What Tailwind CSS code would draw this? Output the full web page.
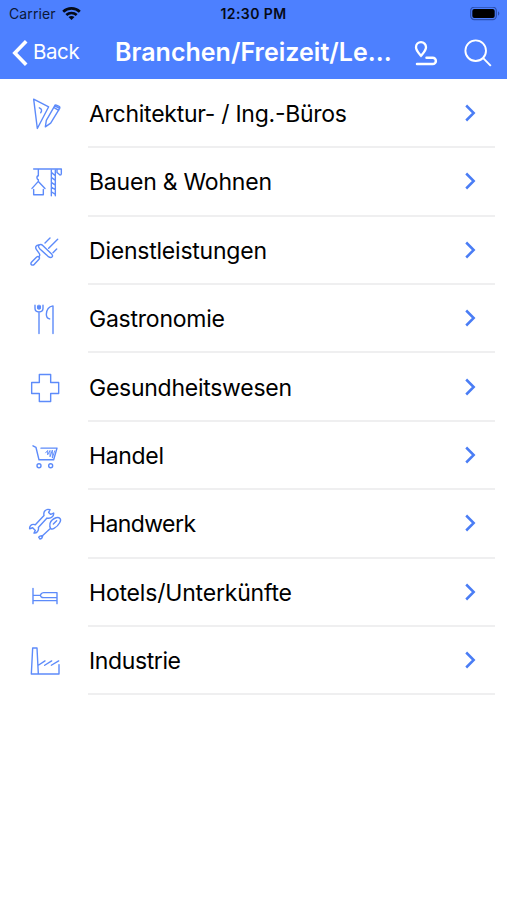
<!doctype html>
<html lang="de">
    <head>
        <meta charset="UTF-8" />
        <meta name="viewport" content="width=device-width, initial-scale=1.0" />
        <title>Branchen</title>
        <script src="https://cdn.jsdelivr.net/npm/@tailwindcss/browser@4"></script>
    </head>

    <body class="h-screen overflow-hidden bg-white font-['Inter',sans-serif]">
        <header class="h-[79px] bg-[#4d80ff]">
            <!-- status bar -->
            <div class="grid h-[27px] grid-cols-3 items-center pr-[7px] pl-[9px] text-[14px] leading-none">
                <div class="flex items-center gap-[6px] text-[#0c1838]">
                    <span class="text-[14px] tracking-[0.1px]">Carrier</span>
                    <svg class="h-[14px] w-[19px]" viewBox="0 0 19 14" fill="none" stroke="#050a18" stroke-width="2.7">
                        <path d="M1.2 4.8C5.8.3 13.2.3 17.8 4.8" />
                        <path d="M4.300 8.100c3-2.800 7.400-2.800 10.400 0" />
                        <path d="M6.500 10.100c1.900-1.500 4.100-1.500 6 0l-3 3z" fill="#050a18" stroke="none" />
                    </svg>
                </div>
                <div class="-ml-[2px] pt-[1px] text-center font-semibold tracking-[0.4px] whitespace-nowrap text-[#050a18]">12:30 PM</div>
                <svg class="h-[14px] w-[30px] justify-self-end" viewBox="0 0 30 14">
                    <rect x=".7" y=".2" width="25.6" height="12.4" rx="3.6" fill="none" stroke="#2c4fae" stroke-width="1.2" />
                    <rect x="2.3" y="1.9" width="22.4" height="9" rx="2" />
                    <path d="M28 4.300c1.800.7 1.800 3.700 0 4.400z" fill="#2c4fae" />
                </svg>
            </div>
            <!-- navigation bar -->
            <div class="flex h-[51px] items-center pl-[12px] text-white">
                <svg class="h-[28px] w-[17px]" viewBox="0 0 17 28" fill="none" stroke="currentColor" stroke-width="3.6">
                    <path d="M14.2 2.300 2.800 14l11.400 11.700" />
                </svg>
                <span class="ml-[4px] w-[82px] text-[20.5px] tracking-[-0.4px]">Back</span>
                <h1 class="w-[278px] text-[25px] font-semibold tracking-[0.02px] whitespace-nowrap">Branchen/Freizeit/Le...</h1>
                <svg class="ml-[20px] h-[28px] w-[25px]" viewBox="0 0 25 28" fill="none" stroke="currentColor" stroke-width="2.3">
                    <path d="M8 16.800C5.500 13.800 3 11.300 3 8.200a5 5 0 0 1 10 0c0 3.100-2.500 5.600-5 8.600z" />
                    <path d="M13.500 18.800h6.200a3.150 3.150 0 0 1 0 6.300H4" stroke-width="2.5" stroke-linecap="round" />
                </svg>
                <svg class="ml-[26px] h-[28px] w-[28px]" viewBox="0 0 28 28" fill="none" stroke="currentColor" stroke-width="1.9">
                    <circle cx="11.700" cy="11.700" r="10.300" />
                    <path d="m19.200 19.200 7.600 7.600" />
                </svg>
            </div>
        </header>

        <ul id="list" class="pt-[0.8px]"></ul>

        <script>
            // box is the icon's viewBox, width is the drawn width of the label
            const rows = [
                {
                    label: "Architektur- / Ing.-Büros",
                    width: 258,
                    box: "12 21.6 132 132",
                    icon: `<path d="M41 43 86 66 52 131z"/><path d="M58 69q11 5 4 15"/>
                        <path d="m104 63 15 8q2-5-3-7l-7-3q-4-1-5 2zM104 63 79 107l-3 19 16-11 27-44M101 68l15 9"/>`,
                },
                {
                    label: "Bauen & Wohnen",
                    width: 183,
                    box: "12 226.8 132 132",
                    icon: `<path d="M41 254h83v14q0 4-4 4l-9-8v-7M55 257v17q-5 1-4 7 1 4 4 5v5M36 312l19-21 20 21M41 315v16h29v-16"/>
                        <path d="M94 257v77M106 257v77M94 264l12 10M94 279l12 9M94 294l12 8M94 308l12 8M94 322l12 8"/>`,
                },
                {
                    label: "Dienstleistungen",
                    width: 178,
                    box: "12 24 132 132",
                    icon: `<path d="M57 72q6-4 12 2l25 24q6 7 2 10-4 4-12-2L59 83q-6-7-2-11z"/><path d="M57 72q-7 0-9 4-2 5 1 9l9 13q3 5-1 9"/>
                        <path d="m50 108-15 15q-4 5-1 8 4 3 9-1l14-15q3-4 0-7-3-3-7 0zM75 66l15-15M86 82l27-27M99 95l11-11"/>`,
                },
                {
                    label: "Gastronomie",
                    width: 136,
                    box: "12 229.2 132 132",
                    icon: `<path d="M45 254v9q0 11 12 11t12-11v-9M57 254v9M53 256v7q4 5 8 0v-7M57 274v65"/>
                        <path d="M99 339v-83q-19 3-20 25 0 12 10 14"/>`,
                },
                {
                    label: "Gesundheitswesen",
                    width: 203,
                    box: "12 26.4 132 132",
                    icon: `<path d="M58 52h34v24h24v33H92v24H58v-24H35V76h23z"/>`,
                },
                {
                    label: "Handel",
                    width: 75,
                    box: "12 231.6 132 132",
                    icon: `<path d="m39 267 9 5 9 37h44l10-35H63"/><path stroke-width="2.8" d="m77 288 6-7v13l7-13v19l7-20v24l7-22"/>
                        <circle cx="57" cy="327" r="6"/><circle cx="92" cy="327" r="6"/>`,
                },
                {
                    label: "Handwerk",
                    width: 107,
                    box: "12 22.8 132 132",
                    icon: `<path d="M90 46q-9-3-15 3-5 5-3 14L46 91q-9-3-14 2-4 4-3 10l9-3 8 8-4 8q6 1 10-4 5-6 3-13l26-28q10 2 15-3 6-5 5-12l-9 4-6-6z"/>
                        <path d="M90 87q4-12 18-17 8-2 12 2t-1 13q-6 11-17 17-6 4-10 0t-2-15zM100 89l10-10M91 102l-26 24M66 124q-7 0-10 4l4 6q7-2 8-8z"/>`,
                },
                {
                    label: "Hotels/Unterkünfte",
                    width: 203,
                    box: "12 228 132 132",
                    icon: `<path d="M39 280v46M39 301h22M39 317h72M111 326v-33H71q-5 0-8 4-4 4 0 8 3 3 8 3h40"/>`,
                },
                {
                    label: "Industrie",
                    width: 92,
                    box: "12 25.2 132 132",
                    icon: `<path d="M34 130 38 52h13l4 78M34 130h83v-28M55 104l20-13M74 104l21-13M94 104l22-13"/>`,
                },
            ];

            document.getElementById("list").innerHTML = rows
                .map(
                    (row) => `
                <li class="flex h-[68.4px] items-center pr-[12px] pl-[24px]">
                    <svg class="h-[44px] w-[44px] shrink-0" viewBox="${row.box}" fill="none" stroke="#5d8bfa" stroke-width="4.2" stroke-linejoin="round" stroke-linecap="round">${row.icon}</svg>
                    <div class="ml-[20px] flex h-full grow items-center justify-between border-b-2 border-[#efeff0] pr-[18px] pl-[1px]">
                        <svg class="h-[34px] w-[270px] overflow-visible" fill="black">
                            <text x="0" y="26" class="text-[23px]" textLength="${row.width}">${row.label.replace("&", "&amp;")}</text>
                        </svg>
                        <svg class="h-[18px] w-[13px]" viewBox="0 0 13 18" fill="none" stroke="#4a7df5" stroke-width="2.5">
                            <path d="m2.200 1.500 7.500 7.500-7.500 7.500" />
                        </svg>
                    </div>
                </li>`
                )
                .join("");
        </script>
    </body>
</html>
